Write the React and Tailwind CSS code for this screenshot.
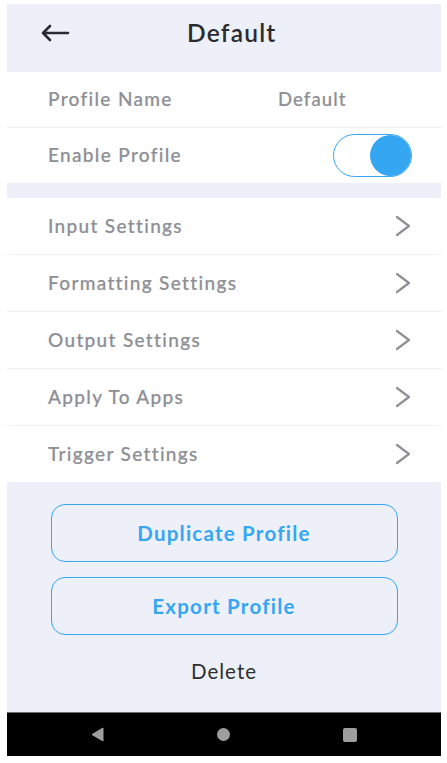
import React from "react"

const font = { fontFamily: "Lato, 'Noto Sans', sans-serif" }

const label = "text-[19px] tracking-[0.07em] font-medium text-[#8e8f95] [-webkit-text-stroke:0.2px_#8e8f95]"

function Chevron() {
  return (
    <svg width="16" height="22" viewBox="0 0 16 22" fill="none">
      <path d="M2 2 L14 11 L2 20" stroke="#8f9096" strokeWidth="2.2" strokeLinecap="round" strokeLinejoin="round" />
    </svg>
  )
}

function NavRow({ text, first }) {
  return (
    <div className={`flex items-center justify-between pl-[41px] pr-[30px] bg-white ${first ? "h-[56px]" : "h-[57px] border-t border-[#eef0f6]"}`}>
      <span className={label}>{text}</span>
      <Chevron />
    </div>
  )
}

export default function App() {
  return (
    <div className="w-[447px] h-[763px] bg-white pt-[4px] pl-[7px] pr-[6px]" style={font}>
      <div className="flex flex-col w-[434px] h-[752px] bg-[#edf0f8]">
        {/* Header */}
        <div className="flex items-center h-[68px] pb-[10px] shrink-0">
          <svg className="ml-[33px]" width="30" height="18" viewBox="0 0 30 18" fill="none">
            <path d="M28 9 H3 M10 2 L3 9 L10 16" stroke="#2b2b2f" strokeWidth="2.6" strokeLinecap="round" strokeLinejoin="round" />
          </svg>
          <h1 className="ml-[117px] text-[24.5px] tracking-[0.05em] font-semibold text-[#2b2b2f]">Default</h1>
        </div>

        {/* Profile */}
        <div className="bg-white">
          <div className="flex items-center h-[55px] pl-[41px]">
            <span className={`w-[230px] ${label}`}>Profile Name</span>
            <span className="text-[18.5px] tracking-[0.06em] font-medium text-[#8e8f95] [-webkit-text-stroke:0.2px_#8e8f95]">Default</span>
          </div>
          <div className="flex items-center justify-between h-[56px] pl-[41px] pr-[29px] border-t border-[#eef0f6]">
            <span className={label}>Enable Profile</span>
            <div className="flex items-center justify-end w-[79px] h-[43px] rounded-full border border-[#35a6f2] bg-white">
              <div className="w-[41px] h-[41px] rounded-full bg-[#35a6f2]" />
            </div>
          </div>
        </div>

        <div className="h-[15px] shrink-0" />

        {/* Settings list */}
        <div className="flex flex-col">
          <NavRow text="Input Settings" first />
          <NavRow text="Formatting Settings" />
          <NavRow text="Output Settings" />
          <NavRow text="Apply To Apps" />
          <NavRow text="Trigger Settings" />
        </div>

        {/* Actions */}
        <div className="flex flex-col items-center flex-1 pt-[22px]">
          <button className="w-[347px] h-[58px] rounded-[14px] border border-[#35a6f2] text-[20.5px] tracking-[0.06em] font-bold text-[#35a6f2]">
            Duplicate Profile
          </button>
          <button className="mt-[15px] w-[347px] h-[58px] rounded-[14px] border border-[#35a6f2] text-[20.5px] tracking-[0.06em] font-bold text-[#35a6f2]">
            Export Profile
          </button>
          <button className="mt-[21px] text-[20.5px] tracking-[0.05em] text-[#2e2e32]">Delete</button>
        </div>

        {/* System nav bar */}
        <div className="flex items-center justify-between h-[44px] shrink-0 bg-black border-t border-[#6e6e70] pl-[84px] pr-[84px]">
          <svg width="13" height="15" viewBox="0 0 13 15">
            <path d="M12 1 V14 L1 7.5 Z" fill="#9e9e9e" strokeLinejoin="round" stroke="#9e9e9e" strokeWidth="1" />
          </svg>
          <div className="w-[13px] h-[13px] rounded-full bg-[#9e9e9e]" />
          <div className="w-[14px] h-[14px] rounded-[2px] bg-[#9e9e9e]" />
        </div>
      </div>
    </div>
  )
}
